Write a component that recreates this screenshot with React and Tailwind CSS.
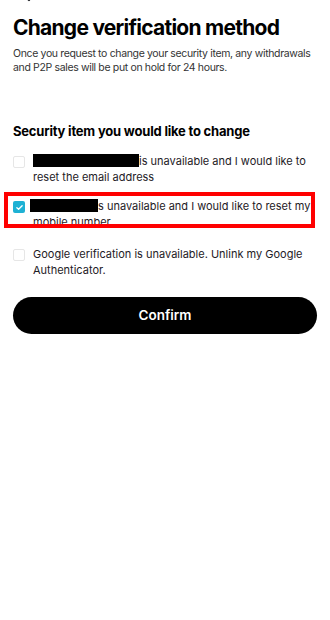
import React, { useState } from 'react';

const Redacted = ({ className }) => (
  <span className={`inline-block bg-black align-[-2px] ${className}`}></span>
);

const CheckBox = ({ checked }) =>
  checked ? (
    <span className="mt-[3px] flex h-[12px] w-[12px] shrink-0 items-center justify-center rounded-[2px] bg-[#1eb1d4]">
      <svg viewBox="0 0 12 12" className="h-[9px] w-[9px]" fill="none" stroke="white" strokeWidth="1.8" strokeLinecap="round" strokeLinejoin="round">
        <path d="M2.5 6.2l2.3 2.2 4.7-4.8" />
      </svg>
    </span>
  ) : (
    <span className="mt-[3px] h-[12px] w-[12px] shrink-0 rounded-[2px] border-[1.5px] border-[#e6e6e6] bg-white"></span>
  );

const App = () => {
  const [selected] = useState(1);

  return (
    <div className="min-h-[620px] w-[330px] bg-white font-['Inter',sans-serif] text-[#1e2026]">
      {/* Header (scrolled off) */}
      <div className="mt-[-13px] h-[16px] px-[19px]">
        <svg viewBox="0 0 16 16" className="h-[16px] w-[16px]" fill="none" stroke="#1e2026" strokeWidth="2.2" strokeLinecap="round" strokeLinejoin="round">
          <path d="M10 3L5 8l5 5" />
        </svg>
      </div>

      <div className="px-[13px]">
        <h1 className="mt-[12px] text-[21px] font-bold leading-[26px] tracking-[-0.75px] text-black">
          Change verification method
        </h1>
        <p className="mt-[6px] text-[10.5px] leading-[14px] tracking-[-0.35px] text-[#333]">
          Once you request to change your security item, any withdrawals and P2P sales will be put on hold for 24 hours.
        </p>

        <h2 className="mt-[47px] text-[13px] font-bold leading-[18px] tracking-[-0.2px] text-black">
          Security item you would like to change
        </h2>

        <div className="flex flex-col">
          {/* Email */}
          <div className="mt-[13px] flex gap-[8px]">
            <CheckBox checked={selected === 0} />
            <p className="text-[11px] leading-[16px]">
              <Redacted className="h-[13px] w-[106px]" />is unavailable and I would like to reset the email address
            </p>
          </div>

          {/* Mobile */}
          <div className="relative mt-[13px] flex gap-[8px]">
            <CheckBox checked={selected === 1} />
            <p className="text-[11px] leading-[16px]">
              <Redacted className="ml-[-3px] h-[13px] w-[68px]" />s unavailable and I would like to reset my mobile number
            </p>
            <div className="pointer-events-none absolute bottom-[2px] left-[-9px] right-[2px] top-[-6px] border-[4px] border-[#ff0000]"></div>
          </div>

          {/* Google */}
          <div className="mt-[16px] flex gap-[8px]">
            <CheckBox checked={selected === 2} />
            <p className="text-[11px] leading-[16px]">
              Google verification is unavailable. Unlink my Google Authenticator.
            </p>
          </div>
        </div>

        <button className="mt-[19px] flex h-[37px] w-full items-center justify-center rounded-full bg-black text-[13.5px] font-semibold text-white">
          Confirm
        </button>
      </div>
    </div>
  );
};

export default App;
